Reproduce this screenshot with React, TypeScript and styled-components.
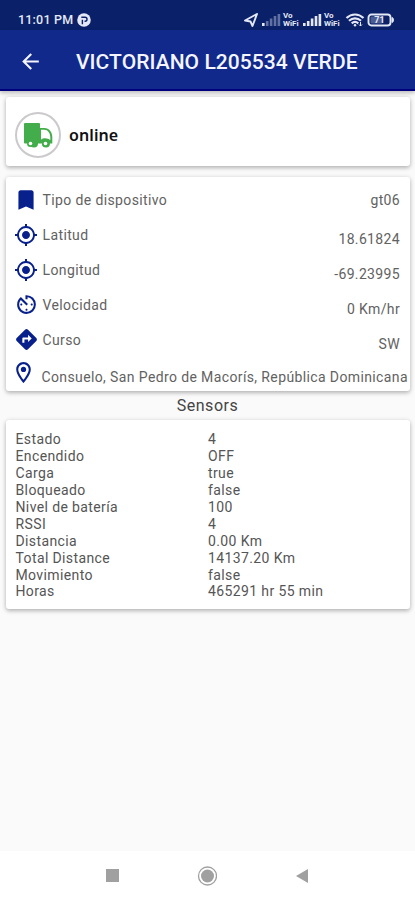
import React from 'react';
import styled, { createGlobalStyle } from 'styled-components';
import { MdBookmark, MdGpsFixed, MdAvTimer, MdDirections, MdOutlineLocationOn, MdArrowBack } from 'react-icons/md';

const GlobalStyle = createGlobalStyle`
  * { box-sizing: border-box; }
  body { margin: 0; background: #fafafa; font-family: Roboto, sans-serif; }
`;

const Screen = styled.div`
  width: 415px;
  height: 900px;
  display: flex;
  flex-direction: column;
  background: #fafafa;
  overflow: hidden;
`;

const StatusBar = styled.div`
  height: 30px;
  flex: none;
  display: flex;
  align-items: center;
  padding: 9px 20px 0 18px;
  background: #0a2069;
  color: #e4e8f6;
`;

const Clock = styled.span`
  width: 57px;
  margin-right: 2px;
  font-size: 12.5px;
  font-weight: 500;
  line-height: 20px;
  letter-spacing: 0.2px;
  white-space: nowrap;
`;

const StatusIcons = styled.div`
  margin-left: auto;
  display: flex;
  align-items: center;
`;

const AppBar = styled.header`
  height: 61px;
  flex: none;
  display: flex;
  align-items: center;
  padding: 3px 0 0 18px;
  background: #10298a;
  border-bottom: 2px solid #00007d;
  box-shadow: 0 2px 4px rgba(0, 0, 0, 0.25);
  color: #f4f5ff;
`;

const Title = styled.h1`
  margin: 1px 0 0 33px;
  font-size: 21px;
  font-weight: 500;
  line-height: 24px;
  letter-spacing: 0.06px;
  white-space: nowrap;
`;

const Card = styled.section<{ $height: number; $top: number }>`
  height: ${(p) => p.$height}px;
  margin: ${(p) => p.$top}px 5px 0 6px;
  flex: none;
  border-radius: 3px;
  background: #fff;
  box-shadow: 0 2px 4px rgba(0, 0, 0, 0.25), 0 0 5px rgba(0, 0, 0, 0.08);
`;

const OnlineCard = styled(Card)`
  display: flex;
  align-items: center;
  padding: 7px 0 0 9px;
`;

const Avatar = styled.div`
  width: 46px;
  height: 46px;
  border: 2px solid #cbc9cb;
  border-radius: 50%;
  display: flex;
  align-items: center;
  justify-content: center;
`;

const Online = styled.strong`
  margin-left: 8px;
  font-family: "Noto Sans", sans-serif;
  font-size: 16px;
  font-weight: 600;
  line-height: 20px;
  letter-spacing: 0.1px;
  color: #111;
`;

const DetailsCard = styled(Card)`
  padding: 6px 10px 0 8px;
`;

const DetailRow = styled.div`
  height: 34.9px;
  display: flex;
  align-items: flex-start;
  color: #626262;
  font-size: 14px;
  line-height: 18px;
  letter-spacing: 0.38px;

  svg { color: #08208b; flex: none; }
`;

const Label = styled.span`
  margin: 8px 0 0 4.5px;
`;

const Value = styled.span<{ $top: number }>`
  margin: ${(p) => p.$top}px 0 0 auto;
  letter-spacing: 0.35px;
`;

const IconSlot = styled.span<{ $top?: number }>`
  width: 24px;
  height: 24px;
  margin-top: ${(p) => p.$top ?? 5}px;
  display: flex;
  align-items: center;
  justify-content: center;
`;

const AddressRow = styled(DetailRow)`
  margin: 0 -10px 0 -3px;
  white-space: nowrap;
`;

const Address = styled.span`
  margin: 11px 0 0 6.5px;
  letter-spacing: 0.38px;
`;

const SectionTitle = styled.h2`
  height: 29px;
  margin: 0;
  flex: none;
  text-align: center;
  font-size: 16px;
  font-weight: 400;
  line-height: 30px;
  letter-spacing: 0.5px;
  color: #444;
`;

const SensorCard = styled(Card)`
  display: grid;
  grid-template-columns: 192.5px 1fr;
  grid-auto-rows: 16.95px;
  padding: 11px 10px 0 9.5px;
  font-size: 14px;
  line-height: 17px;
  letter-spacing: 0.38px;
  color: #555;
`;

const NavBar = styled.nav`
  height: 49px;
  margin-top: auto;
  flex: none;
  display: flex;
  align-items: center;
  justify-content: space-between;
  padding: 0 106px 0 105px;
  background: #fff;
`;

const VoWifiMark = styled.span`
  width: 18px;
  height: 16px;
  margin: 0 1px;
  display: flex;
  flex-direction: column;
  font-size: 8px;
  font-weight: 700;
  line-height: 8px;
`;

const VoWifi = () => (
  <VoWifiMark>
    <span>Vo</span>
    <span>WiFi</span>
  </VoWifiMark>
);

const Signal = ({ dim = false }: { dim?: boolean }) => (
  <svg width="21" height="16" viewBox="0 0 21 16" fill="currentColor">
    {[3, 5, 7.5, 10, 12].map((h, i) => (
      <rect key={h} x={1 + i * 3.9} y={14 - h} width="2.6" height={h} opacity={dim && i > 0 ? 0.4 : 1} />
    ))}
  </svg>
);

const Truck = () => (
  <svg width="30" height="25" viewBox="0 0 30 25">
    <path fill="#43ad4b" fillRule="evenodd" d="M2 0h14a1 1 0 0 1 1 1v4h4.5c4.600 0 7.800 4.200 7.800 9v6.500h-2.300a4 4 0 0 1-8 0h-4a4 4 0 0 1-8 0H2a1 1 0 0 1-1-1V1a1 1 0 0 1 1-1ZM18 6.700v10c2.500-2.200 7-1.600 9.300.5V14c0-3.800-2.500-7.300-6-7.300Z" />
    <circle cx="7.500" cy="20.500" r="3.500" fill="#43ad4b" />
    <circle cx="7.500" cy="20.500" r="1.800" fill="#fff" />
    <circle cx="22.500" cy="20.500" r="3.500" fill="#43ad4b" />
    <circle cx="22.500" cy="20.500" r="1.800" fill="#fff" />
  </svg>
);

const details = [
  { icon: MdBookmark, size: 26, label: 'Tipo de dispositivo', value: 'gt06', top: 8 },
  { icon: MdGpsFixed, size: 24, label: 'Latitud', value: '18.61824', top: 12 },
  { icon: MdGpsFixed, size: 24, label: 'Longitud', value: '-69.23995', top: 12 },
  { icon: MdAvTimer, size: 25, label: 'Velocidad', value: '0 Km/hr', top: 12 },
  { icon: MdDirections, size: 25, label: 'Curso', value: 'SW', top: 12 },
];

const sensors = [
  ['Estado', '4'],
  ['Encendido', 'OFF'],
  ['Carga', 'true'],
  ['Bloqueado', 'false'],
  ['Nivel de batería', '100'],
  ['RSSI', '4'],
  ['Distancia', '0.00 Km'],
  ['Total Distance', '14137.20 Km'],
  ['Movimiento', 'false'],
  ['Horas', '465291 hr 55 min'],
];

export default function App() {
  return (
    <Screen>
      <GlobalStyle />
      <StatusBar>
        <Clock>11:01 PM</Clock>
        <svg width="14" height="14" viewBox="0 0 13 13">
          <circle cx="6.500" cy="6.500" r="6.300" fill="#e4e8f6" />
          <path d="M5 10.500V6.200M4 4h3.500a1.800 1.800 0 0 1 0 3.600H7" fill="none" stroke="#0a2069" strokeWidth="1.300" />
        </svg>
        <StatusIcons>
          <svg width="18" height="16" viewBox="0 0 18 16" fill="none" stroke="currentColor" strokeWidth="1.900" strokeLinejoin="round">
            <path d="M14 2 2 8.500 7.500 9.500l2 4.500Z" />
          </svg>
          <Signal dim />
          <VoWifi />
          <Signal />
          <VoWifi />
          <svg width="24" height="16" viewBox="0 0 24 16" fill="none" stroke="currentColor" strokeWidth="2.200">
            <path d="M3.500 6c5-4.700 12-4.700 17 0M6 8.700c3.500-3.200 8.500-3.200 12 0M8.700 11.300c2-1.700 4.600-1.700 6.600 0" />
            <circle cx="12" cy="13.300" r="1.200" fill="currentColor" stroke="none" />
            <path d="M17.500 10v4m-1.500-1.500 1.500 1.500 1.500-1.500" strokeWidth="1" />
          </svg>
          <svg width="28" height="16" viewBox="0 0 28 16" fill="none" stroke="currentColor">
            <rect x="1.500" y="2.500" width="22" height="11" rx="3" strokeWidth="1.900" />
            <rect x="3.500" y="4.500" width="12" height="7" rx="1" fill="currentColor" opacity=".3" stroke="none" />
            <path d="M25 5.500c2 .5 2 4.500 0 5Z" fill="currentColor" />
            <text x="12.500" y="11.300" textAnchor="middle" fill="currentColor" stroke="none" fontFamily="Roboto" fontWeight="700" fontSize="9">71</text>
          </svg>
        </StatusIcons>
      </StatusBar>
      <AppBar>
        <MdArrowBack size={25} />
        <Title>VICTORIANO L205534 VERDE</Title>
      </AppBar>
      <OnlineCard $height={69} $top={6}>
        <Avatar><Truck /></Avatar>
        <Online>online</Online>
      </OnlineCard>
      <DetailsCard $height={214} $top={11}>
        {details.map(({ icon: Icon, size, label, value, top }) => (
          <DetailRow key={label}>
            <IconSlot><Icon size={size} /></IconSlot>
            <Label>{label}</Label>
            <Value $top={top}>{value}</Value>
          </DetailRow>
        ))}
        <AddressRow>
          <IconSlot $top={3}><MdOutlineLocationOn size={25} /></IconSlot>
          <Address>Consuelo, San Pedro de Macorís, República Dominicana</Address>
        </AddressRow>
      </DetailsCard>
      <SectionTitle>Sensors</SectionTitle>
      <SensorCard $height={189} $top={0}>
        {sensors.map(([name, value]) => (
          <React.Fragment key={name}>
            <span>{name}</span>
            <span>{value}</span>
          </React.Fragment>
        ))}
      </SensorCard>
      <NavBar>
        <svg width="14" height="14"><rect x="1" y="0" width="13" height="13" fill="#a0a0a0" /></svg>
        <svg width="20" height="20" viewBox="-1 0 20 20">
          <circle cx="9.500" cy="10" r="9" fill="none" stroke="#a0a0a0" strokeWidth="1.300" />
          <circle cx="9.500" cy="10" r="6.500" fill="#a0a0a0" />
        </svg>
        <svg width="14" height="16"><path d="M13 1v14L1 8Z" fill="#a0a0a0" /></svg>
      </NavBar>
    </Screen>
  );
}
